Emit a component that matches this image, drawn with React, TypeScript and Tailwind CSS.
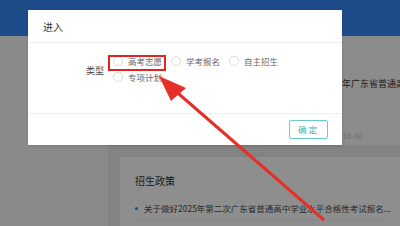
import React from 'react';

const font = { fontFamily: '"Noto Sans CJK SC", "Noto Sans", sans-serif' };

const Radio: React.FC<{ label: string }> = ({ label }) => (
    <label className="flex items-center h-[16px] gap-[5px] text-[8.5px] text-[#666] leading-none whitespace-nowrap">
        <span className="w-[10px] h-[10px] rounded-full border border-[#dcdcdc] bg-white shrink-0"></span>
        <span>{label}</span>
    </label>
);

export default function App() {
    const types = ['高考志愿', '学考报名', '自主招生', '专项计划'];

    return (
        <div className="relative w-[400px] h-[226px] overflow-hidden bg-[#858585]" style={font}>
            {/* page behind the mask */}
            <div className="h-[36px] bg-[#1e4c8b]"></div>
            <div className="flex h-[190px]">
                <div className="w-[108px] shrink-0 bg-[#8a8a8a]"></div>
                <div className="w-[12px] shrink-0 bg-[#838383]"></div>
                <div className="flex-1 min-w-0 overflow-hidden flex flex-col">
                    <div className="h-[109px] bg-[#8c8c8c] flex flex-col pl-[202px] pt-[43px]">
                        <div className="text-[9px] text-[#1c1c1c] whitespace-nowrap leading-none">2025年广东省普通高中学业水平考试</div>
                        <div className="text-[8px] text-[#6e6e6e] whitespace-nowrap leading-none mt-[44px] pl-[20px]">10-30</div>
                    </div>
                    <div className="h-[12px] bg-[#838383]"></div>
                    <div className="flex-1 bg-[#8e8e8e] px-[15px] pt-[19px]">
                        <div className="text-[10px] text-[#1a1a1a] leading-none">招生政策</div>
                        <div className="flex items-center gap-[6px] mt-[18px] pb-[7px] border-b border-[#858585]">
                            <span className="w-[3px] h-[3px] rounded-full bg-[#1e4c8b] shrink-0"></span>
                            <span className="text-[8.5px] text-[#2a2a2a] whitespace-nowrap leading-none">关于做好2025年第二次广东省普通高中学业水平合格性考试报名...</span>
                        </div>
                    </div>
                </div>
            </div>

            {/* modal */}
            <div className="absolute left-[28px] top-[10px] w-[314px] h-[135px] bg-white shadow-sm flex flex-col">
                <div className="h-[33px] flex items-center px-[15px] border-b border-[#eeeeee] text-[10px] text-[#333]">进入</div>
                <div className="h-[70px] flex items-start pt-[10px]">
                    <div className="w-[76px] text-right text-[9px] text-[#444] mt-[11px]">类型</div>
                    <div className="flex flex-wrap w-[180px] gap-x-[9px] ml-[9px]">
                        {types.map((t) => (
                            <Radio key={t} label={t} />
                        ))}
                    </div>
                </div>
                <div className="flex-1 border-t border-[#eeeeee] flex items-center justify-end pr-[14px]">
                    <button className="w-[39px] h-[19px] border border-[#6ccaca] rounded-[2px] text-[8.5px] text-[#35b2b2] tracking-[2px] bg-white leading-none">确定</button>
                </div>
            </div>

            {/* annotation */}
            <div className="absolute left-[108px] top-[55px] w-[58px] h-[16px] border-2 border-[#e32222]"></div>
            <svg className="absolute inset-0" width="400" height="226" viewBox="0 0 400 226">
                <line x1="172" y1="88" x2="324" y2="220" stroke="#e5302a" strokeWidth="3" />
                <polygon points="159,76 186,88 171,101" fill="#e5302a" />
            </svg>
        </div>
    );
}
